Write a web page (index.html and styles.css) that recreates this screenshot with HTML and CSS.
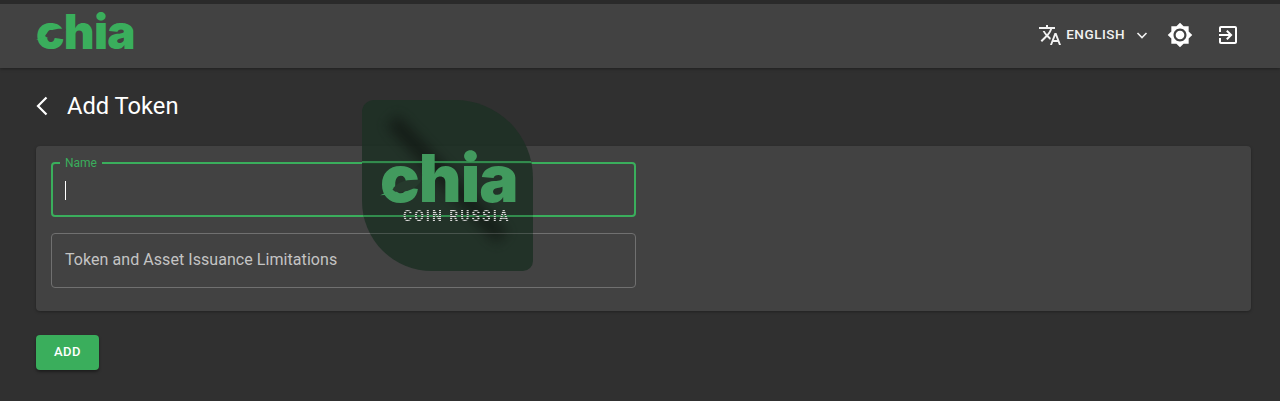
FILE: index.html
```html
<!DOCTYPE html>
<html lang="en">
<head>
    <meta charset="UTF-8">
    <meta name="viewport" content="width=device-width, initial-scale=1.0">
    <title>Add Token</title>
    <link rel="stylesheet" href="styles.css">
</head>
<body>
    <header class="topbar">
        <div class="logo">
            <span class="logo-text">chia</span>
            <svg class="logo-leaf" width="34" height="16" viewBox="0 0 34 16">
                <path d="M0 14 C4 12 7 11 10 10 L12 12 C8 13 4 14 0 14Z" fill="#3aae5c"/>
                <path d="M9 10 C12 4 20 2 30 3 C27 9 20 12 11 11.5Z" fill="#424242"/>
            </svg>
        </div>
        <div class="topbar-actions">
            <svg class="icon" width="24" height="24" viewBox="0 0 24 24">
                <path fill="#f2f2f2" d="M12.87 15.07l-2.54-2.51.03-.03c1.74-1.94 2.98-4.17 3.71-6.53H17V4h-7V2H8v2H1v1.99h11.17C11.5 7.92 10.44 9.75 9 11.35 8.07 10.32 7.3 9.19 6.69 8h-2c.73 1.63 1.73 3.17 2.98 4.56l-5.09 5.02L4 19l5-5 3.11 3.11.76-2.04zM18.5 10h-2L12 22h2l1.12-3h4.75L21 22h2l-4.5-12zm-2.62 7l1.62-4.33L19.12 17h-3.24z"/>
            </svg>
            <span class="lang">ENGLISH</span>
            <svg class="icon chevron" width="16" height="16" viewBox="0 0 16 16">
                <path d="M3.5 6 L8 10.5 L12.5 6" fill="none" stroke="#f2f2f2" stroke-width="1.6"/>
            </svg>
            <svg class="icon gear" width="26" height="26" viewBox="0 0 24 24">
                <path fill="#fff" d="M20 8.69V4h-4.69L12 .69 8.69 4H4v4.69L.69 12 4 15.31V20h4.69L12 23.31 15.31 20H20v-4.69L23.31 12 20 8.69zM12 18c-3.31 0-6-2.69-6-6s2.69-6 6-6 6 2.69 6 6-2.69 6-6 6zm0-10c-2.21 0-4 1.79-4 4s1.79 4 4 4 4-1.79 4-4-1.79-4-4-4z"/>
            </svg>
            <svg class="icon exit" width="24" height="24" viewBox="0 0 24 24">
                <path fill="#fff" d="M10.09 15.59L11.5 17l5-5-5-5-1.41 1.41L12.67 11H3v2h9.67l-2.58 2.59zM19 3H5c-1.11 0-2 .9-2 2v4h2V5h14v14H5v-4H3v4c0 1.1.89 2 2 2h14c1.1 0 2-.9 2-2V5c0-1.1-.9-2-2-2z"/>
            </svg>
        </div>
    </header>

    <main class="content">
        <div class="title-row">
            <svg class="back" width="14" height="20" viewBox="0 0 14 20">
                <path d="M11.5 1.5 L3 10 L11.5 18.5" fill="none" stroke="#fff" stroke-width="2.2"/>
            </svg>
            <h1>Add Token</h1>
        </div>

        <section class="card">
            <fieldset class="field field-active">
                <legend>Name</legend>
                <span class="caret"></span>
            </fieldset>
            <div class="field field-plain">Token and Asset Issuance Limitations</div>
        </section>

        <button class="add-btn">ADD</button>
    </main>

    <div class="watermark">
        <div class="smudge"></div>
        <div class="wm-line wm-line-top"></div>
        <div class="wm-line wm-line-mid"></div>
        <div class="wm-line wm-line-gray"></div>
        <div class="wm-logo">chia</div>
        <svg class="wm-leaf" width="47" height="22" viewBox="0 0 34 16">
            <path d="M0 14 C4 12 7 11 10 10 L12 12 C8 13 4 14 0 14Z" fill="#429a5e"/>
            <path d="M9 10 C12 4 20 2 30 3 C27 9 20 12 11 11.5Z" fill="#263a2d"/>
        </svg>
        <div class="wm-text">COIN RUSSIA</div>
    </div>
</body>
</html>
```

FILE: styles.css
```css
html, body {
    height: 100%;
}
body {
    font-family: Roboto, Arial, sans-serif;
    margin: 0;
    background: #303030;
    color: #fff;
    overflow: hidden;
}
.topbar {
    box-sizing: border-box;
    height: 68px;
    border-top: 4px solid #2a2a2a;
    background: #424242;
    box-shadow: 0 1px 3px rgba(0, 0, 0, 0.35);
    display: flex;
    justify-content: space-between;
    align-items: center;
    padding: 0 40px 0 36px;
}
.logo {
    position: relative;
    margin-top: -8px;
}
.logo-text {
    font-family: Inter, sans-serif;
    font-weight: 900;
    font-size: 47.5px;
    line-height: 48px;
    letter-spacing: -0.8px;
    color: #3aae5c;
}
.logo-leaf {
    position: absolute;
    left: 0;
    top: 18px;
}
.topbar-actions {
    display: flex;
    align-items: center;
    margin-top: -2px;
}
.lang {
    font-size: 13.5px;
    font-weight: 500;
    letter-spacing: 0.5px;
    margin-left: 4px;
    margin-bottom: 2px;
    color: #f2f2f2;
}
.chevron {
    margin-left: 9px;
}
.gear {
    margin-left: 17px;
}
.exit {
    margin-left: 23px;
}
.icon {
    display: block;
}
.content {
    padding: 0 29px 0 36px;
}
.title-row {
    display: flex;
    align-items: center;
    gap: 18px;
    height: 76px;
    margin-bottom: 2px;
    margin-left: -1px;
}
h1 {
    margin: 0;
    font-size: 23.7px;
    font-weight: 400;
    line-height: 32px;
}
.card {
    background: #424242;
    border-radius: 4px;
    box-shadow: 0 1px 3px rgba(0, 0, 0, 0.3);
    padding: 11px 15px 23px;
    display: flex;
    flex-direction: column;
    gap: 16px;
}
.field {
    box-sizing: border-box;
    width: 585px;
    margin: 0;
    border-radius: 4px;
}
.field-active {
    height: 60px;
    padding: 0 12px;
    border: 2px solid #3aae5c;
    display: flex;
    align-items: center;
}
.field-active legend {
    padding: 0 5px;
    margin-left: -5px;
    font-size: 12px;
    line-height: 12px;
    color: #3aae5c;
}
.caret {
    display: block;
    width: 1px;
    height: 19px;
    background: #fff;
    margin-top: 12px;
}
.field-plain {
    height: 55px;
    padding: 0 13px 3px;
    border: 1px solid #707070;
    display: flex;
    align-items: center;
    font-size: 16px;
    letter-spacing: 0.06px;
    color: #c4c4c4;
}
.add-btn {
    display: block;
    margin-top: 24px;
    padding: 0 0 2px;
    width: 63px;
    height: 35px;
    border: 0;
    border-radius: 4px;
    background: #3aae5c;
    box-shadow: 0 2px 3px rgba(0, 0, 0, 0.4);
    color: #fff;
    font-family: Roboto, Arial, sans-serif;
    font-size: 13px;
    font-weight: 500;
    letter-spacing: 0.4px;
}
.watermark {
    position: absolute;
    left: 362px;
    top: 100px;
    width: 171px;
    height: 171px;
    overflow: hidden;
    background: rgba(30, 48, 36, 0.88);
    border-radius: 12px 78px 10px 70px;
}
.smudge {
    position: absolute;
    left: 5px;
    top: 72px;
    width: 160px;
    height: 14px;
    background: rgba(15, 20, 16, 0.8);
    filter: blur(7px);
    transform: rotate(47deg);
}
.wm-line {
    position: absolute;
    left: 0;
    right: 0;
    height: 2px;
    background: rgba(58, 174, 92, 0.7);
}
.wm-line-top {
    top: 61px;
}
.wm-line-mid {
    top: 115px;
}
.wm-line-gray {
    top: 133px;
    height: 1px;
    background: rgba(150, 150, 150, 0.3);
}
.wm-logo {
    position: absolute;
    left: 18px;
    top: 54px;
    font-family: Inter, sans-serif;
    font-weight: 900;
    font-size: 66px;
    line-height: 48px;
    letter-spacing: -1px;
    color: #429a5e;
}
.wm-leaf {
    position: absolute;
    left: 18px;
    top: 76px;
}
.wm-text {
    position: absolute;
    left: 41px;
    top: 108px;
    font-size: 14px;
    font-weight: 700;
    letter-spacing: 2px;
    line-height: 16px;
    white-space: nowrap;
    color: transparent;
    background: repeating-linear-gradient(#dcdcdc 0 1px, #3a4a3e 1px 2px);
    -webkit-background-clip: text;
    background-clip: text;
}
```
